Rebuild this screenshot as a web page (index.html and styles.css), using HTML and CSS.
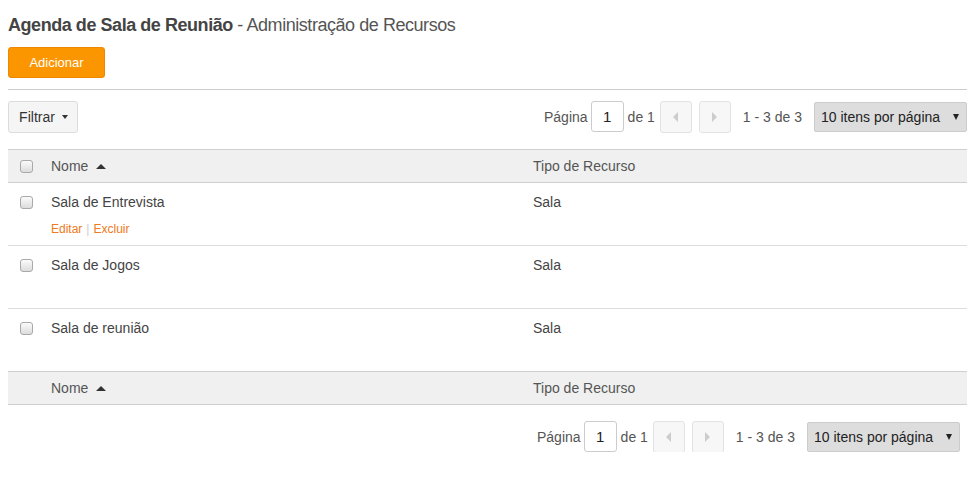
FILE: index.html
```html
<!DOCTYPE html>
<html lang="pt">
<head>
<meta charset="utf-8">
<title>Agenda de Sala de Reunião</title>
<link rel="stylesheet" href="styles.css">
</head>
<body>
<h1 class="title"><b>Agenda de Sala de Reunião</b> - Administração de Recursos</h1>
<button class="btn-add">Adicionar</button>
<hr class="sep">
<div class="toolbar">
  <button class="btn-filter">Filtrar <span class="caret"></span></button>
  <div class="pager">
    <span>Página</span>
    <span class="page-input">1</span>
    <span>de 1</span>
    <span class="nav-btn"><span class="tri-left"></span></span>
    <span class="nav-btn"><span class="tri-right"></span></span>
    <span class="range">1 - 3 de 3</span>
    <span class="per-page">10 itens por página <span class="sel-caret"></span></span>
  </div>
</div>
<div class="table">
  <div class="row head">
    <div class="cell chk"><span class="checkbox"></span></div>
    <div class="cell">Nome <span class="sort-up"></span></div>
    <div class="cell">Tipo de Recurso</div>
  </div>
  <div class="row body">
    <div class="cell chk"><span class="checkbox"></span></div>
    <div class="cell">Sala de Entrevista
      <div class="actions"><a>Editar</a><span class="pipe">|</span><a>Excluir</a></div>
    </div>
    <div class="cell">Sala</div>
  </div>
  <div class="row body">
    <div class="cell chk"><span class="checkbox"></span></div>
    <div class="cell">Sala de Jogos</div>
    <div class="cell">Sala</div>
  </div>
  <div class="row body">
    <div class="cell chk"><span class="checkbox"></span></div>
    <div class="cell">Sala de reunião</div>
    <div class="cell">Sala</div>
  </div>
  <div class="row head foot">
    <div class="cell chk"></div>
    <div class="cell">Nome <span class="sort-up"></span></div>
    <div class="cell">Tipo de Recurso</div>
  </div>
</div>
<div class="bottom-pager">
  <div class="pager">
    <span>Página</span>
    <span class="page-input">1</span>
    <span>de 1</span>
    <span class="nav-btn"><span class="tri-left"></span></span>
    <span class="nav-btn"><span class="tri-right"></span></span>
    <span class="range">1 - 3 de 3</span>
    <span class="per-page">10 itens por página <span class="sel-caret"></span></span>
  </div>
</div>
</body>
</html>
```
FILE: styles.css
```css
body {
  margin: 8px;
  font-family: "Liberation Sans", Arial, sans-serif;
  color: #444;
  background: #fff;
}
.title {
  margin: 7px 0 0;
  font-size: 18px;
  line-height: 20px;
  font-weight: normal;
  color: #555;
  letter-spacing: -0.45px;
}
.title b {
  font-weight: bold;
  color: #444;
}
.btn-add {
  display: block;
  margin-top: 12px;
  width: 97px;
  height: 31px;
  background: #fb9600;
  border: 1px solid #ee8800;
  border-radius: 3px;
  color: #fff;
  font-family: inherit;
  font-size: 13px;
  padding: 0;
}
.sep {
  margin: 11px 0 0;
  border: 0;
  border-top: 1px solid #cccccc;
  height: 0;
}
.toolbar {
  margin-top: 11px;
  display: flex;
  justify-content: space-between;
  align-items: flex-start;
}
.btn-filter {
  height: 32px;
  width: 70px;
  background: #f5f5f5;
  border: 1px solid #dcdcdc;
  border-radius: 3px;
  font-family: inherit;
  font-size: 14px;
  color: #333;
  padding: 0 0 0 1px;
  display: flex;
  align-items: center;
  justify-content: center;
  gap: 7px;
}
.caret {
  display: inline-block;
  width: 0;
  height: 0;
  border-left: 3px solid transparent;
  border-right: 3px solid transparent;
  border-top: 4px solid #333;
}
.pager {
  display: flex;
  align-items: center;
  font-size: 14px;
  color: #555;
  height: 31px;
}
.page-input {
  width: 31px;
  height: 29px;
  border: 1px solid #ccc;
  border-radius: 3px;
  margin: 0 4px 0 3px;
  display: flex;
  align-items: center;
  justify-content: center;
  color: #222;
  font-size: 15px;
  box-sizing: content-box;
}
.nav-btn {
  width: 30px;
  height: 30px;
  border: 1px solid #e3e3e3;
  border-radius: 3px;
  background: #f7f7f7;
  display: flex;
  align-items: center;
  justify-content: center;
  margin-left: 5px;
}
.nav-btn + .nav-btn { margin-left: 7px; }
.tri-left {
  width: 0; height: 0;
  border-top: 5px solid transparent;
  border-bottom: 5px solid transparent;
  border-right: 5px solid #ccc;
}
.tri-right {
  width: 0; height: 0;
  border-top: 5px solid transparent;
  border-bottom: 5px solid transparent;
  border-left: 5px solid #ccc;
}
.range {
  margin-left: 12px;
  margin-right: 12px;
}
.per-page {
  width: 153px;
  height: 30px;
  background: #dddddd;
  border: 1px solid #cccccc;
  border-radius: 2px;
  display: flex;
  align-items: center;
  justify-content: space-between;
  padding: 0 7px 0 6px;
  box-sizing: border-box;
  color: #222;
}
.sel-caret {
  width: 0; height: 0;
  border-left: 3px solid transparent;
  border-right: 3px solid transparent;
  border-top: 6px solid #222;
}
.table {
  margin-top: 16px;
  font-size: 14px;
}
.row {
  display: grid;
  grid-template-columns: 43px 482px 1fr;
}
.row.head {
  background: #f0f0f0;
  border-top: 1px solid #cfcfcf;
  border-bottom: 1px solid #cfcfcf;
  height: 32px;
  align-items: center;
  color: #555;
}
.row.body {
  border-bottom: 1px solid #dddddd;
  align-items: start;
  padding-top: 10px;
  box-sizing: content-box;
  height: 52px;
}
.row.body:nth-last-child(2) { border-bottom: 0; }
.cell {
  line-height: 18px;
}
.chk {
  padding-left: 12px;
  display: flex;
  align-items: center;
}
.row.body .chk { height: 18px; }
.checkbox {
  display: inline-block;
  width: 11px;
  height: 11px;
  border: 1px solid #a9a9a9;
  border-radius: 3px;
  background: linear-gradient(#fbfbfb, #dcdcdc);
}
.sort-up {
  display: inline-block;
  width: 0; height: 0;
  border-left: 5px solid transparent;
  border-right: 5px solid transparent;
  border-bottom: 5px solid #333;
  margin-left: 4px;
  vertical-align: 2px;
}
.actions {
  margin-top: 11px;
  font-size: 12px;
  line-height: 14px;
}
.actions a {
  color: #f07a20;
}
.pipe {
  color: #ccc;
  margin: 0 4px;
}
.bottom-pager {
  display: flex;
  justify-content: flex-end;
  margin-top: 16px;
  margin-right: 7px;
}
```
